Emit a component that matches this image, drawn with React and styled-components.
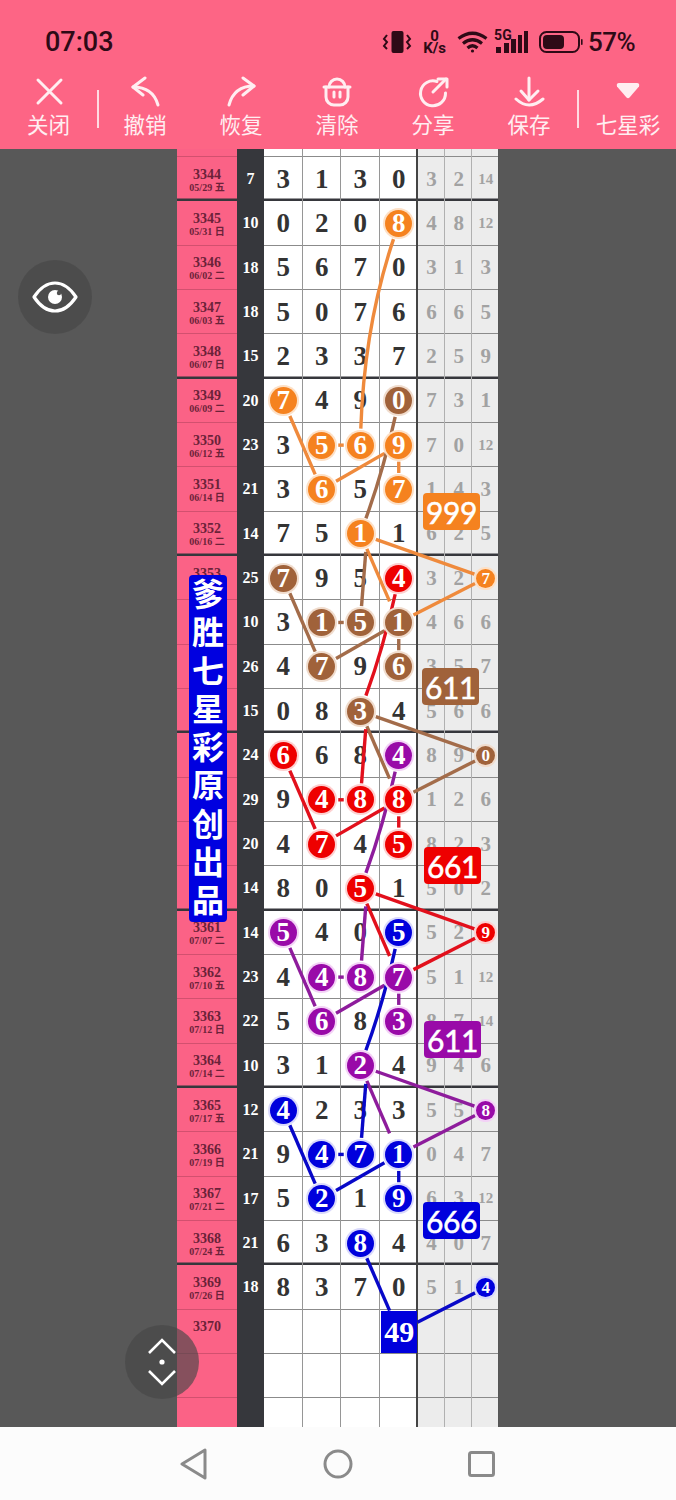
import React from "react";
import styled, { createGlobalStyle } from "styled-components";

const SERIF = `"Liberation Serif", "Noto Sans CJK SC", serif`;
const CJK = `"Noto Sans", "Noto Sans CJK SC", sans-serif`;

const tones = {
  o: { bg: "#f5821f", halo: "#fde0c6", line: "#ef8a3c" },
  b: { bg: "#a0623a", halo: "#f0dccd", line: "#a36c4a" },
  r: { bg: "#ee0000", halo: "#fdd0d0", line: "#e2101c" },
  p: { bg: "#990aa8", halo: "#f3d2f6", line: "#8e1c9c" },
  u: { bg: "#0000dc", halo: "#d9d9fb", line: "#0808c8" }
};

// id, draw date, sum, four main digits, three side digits; a trailing letter puts the digit on a ball
const rows = [
  ["3344", "05/29 五", "7", "3 1 3 0", "3 2 14"],
  ["3345", "05/31 日", "10", "0 2 0 8o", "4 8 12"],
  ["3346", "06/02 二", "18", "5 6 7 0", "3 1 3"],
  ["3347", "06/03 五", "18", "5 0 7 6", "6 6 5"],
  ["3348", "06/07 日", "15", "2 3 3 7", "2 5 9"],
  ["3349", "06/09 二", "20", "7o 4 9 0b", "7 3 1"],
  ["3350", "06/12 五", "23", "3 5o 6o 9o", "7 0 12"],
  ["3351", "06/14 日", "21", "3 6o 5 7o", "1 4 3"],
  ["3352", "06/16 二", "14", "7 5 1o 1", "6 2 5"],
  ["3353", "06/19 五", "25", "7b 9 5 4r", "3 2 7o"],
  ["3354", "06/21 日", "10", "3 1b 5b 1b", "4 6 6"],
  ["3355", "06/23 二", "26", "4 7b 9 6b", "3 5 7"],
  ["3356", "06/26 五", "15", "0 8 3b 4", "5 6 6"],
  ["3357", "06/28 日", "24", "6r 6 8 4p", "8 9 0b"],
  ["3358", "06/30 二", "29", "9 4r 8r 8r", "1 2 6"],
  ["3359", "07/03 五", "20", "4 7r 4 5r", "8 2 3"],
  ["3360", "07/05 日", "14", "8 0 5r 1", "5 0 2"],
  ["3361", "07/07 二", "14", "5p 4 0 5u", "5 2 9r"],
  ["3362", "07/10 五", "23", "4 4p 8p 7p", "5 1 12"],
  ["3363", "07/12 日", "22", "5 6p 8 3p", "8 7 14"],
  ["3364", "07/14 二", "10", "3 1 2p 4", "9 4 6"],
  ["3365", "07/17 五", "12", "4u 2 3 3", "5 5 8p"],
  ["3366", "07/19 日", "21", "9 4u 7u 1u", "0 4 7"],
  ["3367", "07/21 二", "17", "5 2u 1 9u", "6 3 12"],
  ["3368", "07/24 五", "21", "6 3 8u 4", "4 0 7"],
  ["3369", "07/26 日", "18", "8 3 7 0", "5 1 4u"],
  ["3370", "", "", "_ _ _ 49u", "_ _ _"],
  ["", "", "", "_ _ _ _", "_ _ _"],
  ["", "", "", "_ _ _ _", "_ _ _"]
];

const heavyAfter = [0, 4, 8, 12, 16, 20, 24];

const ROW_H = 44.33;
const TOP_H = 8;
const MAIN_X = 87;
const MAIN_W = 38.5;
const SIDE_X = MAIN_X + MAIN_W * 4;
const SIDE_W = 27.1;

const mainX = k => MAIN_X + MAIN_W * (k + 0.5);
const sideX = k => SIDE_X + SIDE_W * (k + 0.5);
const rowY = i => TOP_H + ROW_H * (i + 0.5);

const BIG = 16.5;
const SMALL = 12;

// pull a point towards another one so the stroke stops short of the ball
function pull(a, b, by) {
  const dx = b[0] - a[0];
  const dy = b[1] - a[1];
  const len = Math.hypot(dx, dy);
  return [a[0] + (dx / len) * by, a[1] + (dy / len) * by];
}

function straight(a, b, trimA, trimB) {
  const s = pull(a, b, trimA);
  const e = pull(b, a, trimB);
  return `M${s[0]} ${s[1]}L${e[0]} ${e[1]}`;
}

function curve(a, b, ctrl, trimA, trimB) {
  const s = pull(a, ctrl, trimA);
  const e = pull(b, ctrl, trimB);
  return `M${s[0]} ${s[1]}Q${ctrl[0]} ${ctrl[1]} ${e[0]} ${e[1]}`;
}

function buildStrokes() {
  const out = [];
  const groups = [
    ["o", 5],
    ["b", 9],
    ["r", 13],
    ["p", 17],
    ["u", 21]
  ];
  groups.forEach(([tone, b]) => {
    const add = d => out.push({ tone, d });
    const m = (k, i) => [mainX(k), rowY(i)];
    const side = i => [sideX(2), rowY(i)];
    add(straight(m(0, b), m(1, b + 2), BIG, BIG));
    add(straight(m(1, b + 2), m(3, b + 1), BIG, BIG));
    add(straight(m(1, b + 1), m(2, b + 1), BIG, BIG));
    add(straight(m(3, b + 1), m(3, b + 2), BIG, BIG));
    if (tone === "u") {
      // the last drop runs into the pending square rather than the side ball
      add(straight(m(2, b + 3), m(3, b + 5), BIG, 23));
      add(straight(side(b + 4), m(3, b + 5), SMALL, 21));
    } else {
      add(straight(m(2, b + 3), side(b + 4), BIG, SMALL));
      add(straight(side(b + 4), m(3, b + 5), SMALL, BIG));
      add(straight(m(2, b + 3), m(3, b + 5), BIG, 23));
    }
    if (tone === "o") {
      add(curve(m(3, 1), m(2, 6), [mainX(2) + 4, rowY(1) + 103], BIG, BIG));
    } else {
      const from = m(3, b - 4);
      add(curve(from, m(2, b - 1), [mainX(2) + 23, from[1] + 70], BIG, BIG));
      add(straight(m(2, b + 1), [mainX(2) + 5.5, rowY(b - 1) + 18], BIG, 0));
    }
  });
  return out;
}

const strokes = buildStrokes();

const tags = [
  { text: "999", tone: "o", x: 246, y: 344 },
  { text: "611", tone: "b", x: 245, y: 519 },
  { text: "661", tone: "r", x: 247, y: 698 },
  { text: "611", tone: "p", x: 247, y: 872 },
  { text: "666", tone: "u", x: 246, y: 1053 }
];

const GlobalStyle = createGlobalStyle`
  html, body {
    margin: 0;
    padding: 0;
    background: #585858;
  }
`;

const Screen = styled.div`
  position: relative;
  width: 676px;
  height: 1500px;
  display: flex;
  flex-direction: column;
  overflow: hidden;
  background: #585858;
`;

const Header = styled.header`
  flex: 0 0 149px;
  background: #fd6585;
  display: flex;
  flex-direction: column;
`;

const StatusBar = styled.div`
  height: 76px;
  padding: 7px 41px 0 45px;
  box-sizing: border-box;
  display: flex;
  align-items: center;
  color: #2e0a16;
  font-family: Roboto, sans-serif;
`;

const Clock = styled.div`
  font-size: 27px;
  font-weight: 500;
`;

const StatusIcons = styled.div`
  margin-left: auto;
  display: flex;
  align-items: center;
  gap: 10px;
`;

const Speed = styled.div`
  width: 25px;
  display: flex;
  flex-direction: column;
  align-items: center;
  font-size: 15px;
  font-weight: 700;
  line-height: 12px;
`;

const Network = styled.div`
  position: relative;
  width: 35px;
  height: 22px;
  margin-left: -4px;
`;

const NetworkLabel = styled.span`
  position: absolute;
  left: 0;
  top: -3px;
  font-size: 14px;
  font-weight: 700;
  line-height: 14px;
`;

const Percent = styled.div`
  font-size: 26px;
  font-weight: 500;
  letter-spacing: -0.6px;
  margin-left: -5px;
`;

const Toolbar = styled.nav`
  display: flex;
  align-items: flex-start;
`;

const Tool = styled.div`
  flex: 0 0 ${p => p.$width || 96}px;
  box-sizing: border-box;
  padding-left: ${p => p.$inset || 0}px;
  display: flex;
  flex-direction: column;
  align-items: center;
  color: #ffeef1;
`;

const ToolLabel = styled.span`
  margin-top: 2px;
  font-family: ${CJK};
  font-size: 21.5px;
  line-height: 30px;
  white-space: nowrap;
`;

const ToolRule = styled.span`
  flex: 0 0 2px;
  height: 38px;
  margin: 14px -2px 0 0;
  background: #ffdbe2;
`;

const Board = styled.main`
  flex: 1;
  min-height: 0;
  padding-left: 177px;
  overflow: hidden;
`;

const Table = styled.div`
  position: relative;
  width: 322px;
  height: 100%;
  overflow: hidden;
`;

const Row = styled.div`
  display: grid;
  grid-template-columns: 60px 27px repeat(4, ${MAIN_W}px) repeat(3, ${SIDE_W}px);
  height: ${p => p.$height}px;
`;

const bottomRule = (heavy, color) =>
  heavy ? "inset 0 -2.5px 0 #36373c" : `inset 0 -1px 0 ${color}`;

const Cell = styled.div`
  display: flex;
  align-items: center;
  justify-content: center;
  min-width: 0;
  font-family: ${SERIF};
  font-weight: 700;
`;

const IdCell = styled(Cell)`
  flex-direction: column;
  padding-top: 2px;
  box-sizing: border-box;
  background: #fb6286;
  color: #6b2239;
  box-shadow: ${p => bottomRule(p.$heavy, "#d2506f")};
`;

const IdText = styled.span`
  font-size: 14px;
  line-height: 15px;
`;

const DateText = styled.span`
  height: 12px;
  font-size: 10px;
  line-height: 12px;
  white-space: nowrap;
`;

const SumCell = styled(Cell)`
  background: #36373c;
  color: #fff;
  font-size: 16px;
`;

const NumCell = styled(Cell)`
  background: #fff;
  color: #333;
  font-size: 27px;
  box-shadow: ${p => (p.$last ? "inset -2px 0 0 #444" : "inset -1px 0 0 #969696")},
    ${p => bottomRule(p.$heavy, "#8b8b8b")};
`;

const SideCell = styled(Cell)`
  background: #ececec;
  color: #a2a2a2;
  font-size: ${p => (p.$tiny ? 15 : 21)}px;
  box-shadow: ${p => (p.$last ? "inset -1px 0 0 #555" : "inset -1px 0 0 #b0b0b0")},
    ${p => bottomRule(p.$heavy, "#8b8b8b")};
`;

const Ball = styled.span`
  position: relative;
  z-index: 2;
  flex: none;
  width: ${p => (p.$small ? 19 : 27)}px;
  height: ${p => (p.$small ? 19 : 27)}px;
  border-radius: 50%;
  display: flex;
  align-items: center;
  justify-content: center;
  background: ${p => tones[p.$tone].bg};
  box-shadow: 0 0 0 2px ${p => tones[p.$tone].halo};
  color: #fff;
  font-size: ${p => (p.$small ? 17 : 27)}px;
  line-height: 1;
`;

const Pending = styled.span`
  position: relative;
  z-index: 2;
  flex: none;
  width: 36px;
  height: 42px;
  margin-left: 1px;
  display: flex;
  align-items: center;
  justify-content: center;
  background: ${p => tones[p.$tone].bg};
  color: #fff;
  font-size: 30px;
  font-weight: 700;
`;

const Strokes = styled.svg`
  position: absolute;
  left: 0;
  top: 0;
  z-index: 1;
  pointer-events: none;
`;

const Tag = styled.div`
  position: absolute;
  left: ${p => p.$x}px;
  top: ${p => p.$y}px;
  z-index: 3;
  width: 57px;
  height: 37px;
  border-radius: 4px;
  display: flex;
  align-items: center;
  justify-content: center;
  background: ${p => tones[p.$tone].bg};
  color: #fff;
  font-family: Lato, sans-serif;
  font-size: 30px;
  line-height: 1;
  letter-spacing: -0.4px;
  -webkit-text-stroke: 0.5px #fff;
`;

const Banner = styled.div`
  position: absolute;
  left: 12px;
  top: 426px;
  z-index: 4;
  box-sizing: border-box;
  width: 38px;
  height: 347px;
  padding: 4px 0 0;
  border-radius: 4px;
  display: flex;
  justify-content: center;
  background: #0000e0;
  color: #fff;
  font-family: "Noto Sans CJK SC", sans-serif;
  font-size: 32px;
  font-weight: 700;
  line-height: 38px;
  letter-spacing: 6.25px;
  white-space: nowrap;
  writing-mode: vertical-rl;
  text-orientation: upright;
`;

const Float = styled.div`
  position: absolute;
  z-index: 5;
  left: ${p => p.$x}px;
  top: ${p => p.$y}px;
  width: 74px;
  height: 74px;
  border-radius: 50%;
  display: flex;
  align-items: center;
  justify-content: center;
  background: rgba(70, 70, 70, 0.65);
`;

const SystemBar = styled.footer`
  flex: 0 0 73px;
  background: #fcfcfc;
  display: flex;
  align-items: center;
  justify-content: center;
  gap: 96px;
`;

const iconStroke = {
  fill: "none",
  stroke: "currentColor",
  strokeWidth: 3,
  strokeLinecap: "round",
  strokeLinejoin: "round"
};

const ToolIcon = ({ children }) => (
  <svg width="32" height="32" viewBox="0 0 32 32" {...iconStroke}>
    {children}
  </svg>
);

const tools = [
  {
    label: "撤销",
    icon: (
      <>
        <path d="M16 2L4 11L14 19" />
        <path d="M4 11Q24 11 29 29" />
      </>
    )
  },
  {
    label: "恢复",
    icon: (
      <>
        <path d="M18 2L29 10L18 19" />
        <path d="M29 10Q9 10 4 29" />
      </>
    )
  },
  {
    label: "清除",
    icon: (
      <>
        <path d="M3 11H29" />
        <path d="M8 11a8 8 0 0 1 16 0" />
        <path d="M5 11V21a8 8 0 0 0 8 8h6a8 8 0 0 0 8-8V11" />
        <path d="M13 16v5M19 16v5" />
      </>
    )
  },
  {
    label: "分享",
    icon: (
      <>
        <path d="M20 5.5A12.5 12.5 0 1 0 28.5 17" />
        <path d="M16 16L29 3" />
        <path d="M21 3H30V11" />
      </>
    )
  },
  {
    label: "保存",
    icon: (
      <>
        <path d="M16 2V24" />
        <path d="M8 15L16 24L25 15" />
        <path d="M3 23Q16 35 30 23" />
      </>
    )
  }
];

function Vibrate() {
  return (
    <svg width="30" height="22" viewBox="0 0 30 22">
      <rect x="9.5" y="0" width="12" height="22" rx="2" fill="currentColor" />
      <path
        d="M5 4L2 8L5 11L2 15L5 18M25 4L28 8L25 11L28 15L25 18"
        fill="none"
        stroke="currentColor"
        strokeWidth="2"
      />
    </svg>
  );
}

function Wifi() {
  return (
    <svg width="31" height="22" viewBox="0 0 31 22" fill="none" stroke="currentColor" strokeWidth="3.2">
      <path d="M1.5 7.5Q15.5 -3 29.5 7.5" />
      <path d="M6 12.5Q15.5 5 25 12.5" />
      <path d="M10.5 17Q15.5 12.5 20.5 17" />
      <circle cx="15.5" cy="20" r="1.6" fill="currentColor" stroke="none" />
    </svg>
  );
}

function Bars() {
  return (
    <svg width="35" height="22" viewBox="0 0 35 22" fill="currentColor">
      <rect x="2" y="16" width="5" height="6" />
      <rect x="10" y="12" width="5" height="10" />
      <rect x="17" y="8" width="5" height="14" />
      <rect x="24" y="4" width="4" height="18" />
      <rect x="30" y="0" width="4" height="22" />
    </svg>
  );
}

function Battery() {
  return (
    <svg width="44" height="22" viewBox="0 0 44 22">
      <rect x="1" y="1" width="39" height="20" rx="6.5" fill="none" stroke="currentColor" strokeWidth="2" />
      <rect x="4" y="4" width="21" height="14" rx="4" fill="currentColor" />
      <rect x="42" y="8" width="1.6" height="6" rx="0.8" fill="currentColor" />
    </svg>
  );
}

function Eye() {
  return (
    <svg width="46" height="34" viewBox="0 0 46 34" fill="none" stroke="#fff" strokeWidth="3.2">
      <path d="M2 17C8 8 15 3 23 3S38 8 44 17C38 26 31 31 23 31S8 26 2 17Z" strokeLinejoin="round" />
      <circle cx="23" cy="17" r="7" fill="#fff" stroke="none" />
      <circle cx="27" cy="13" r="2.2" fill="#4f4f4f" stroke="none" />
    </svg>
  );
}

function Stepper() {
  return (
    <svg width="30" height="48" viewBox="0 0 30 48" fill="none" stroke="#fff" strokeWidth="2.6">
      <path d="M2 15L15 2L28 15" />
      <path d="M2 33L15 46L28 33" />
      <circle cx="15" cy="24" r="2.6" fill="#fff" stroke="none" />
    </svg>
  );
}

function Digit({ value, small }) {
  if (value === "_") return null;
  const match = value.match(/^(\d+)([obrpu])?$/);
  const [, digits, tone] = match;
  if (!tone) return digits;
  if (digits.length > 1) return <Pending $tone={tone}>{digits}</Pending>;
  return (
    <Ball $tone={tone} $small={small}>
      {digits}
    </Ball>
  );
}

function DrawRow({ row, index }) {
  const [id, date, sum, main, side] = row;
  const heavy = heavyAfter.includes(index);
  const mainCells = main.split(" ");
  const sideCells = side.split(" ");
  return (
    <Row $height={ROW_H}>
      <IdCell $heavy={heavy}>
        <IdText>{id}</IdText>
        <DateText>{date}</DateText>
      </IdCell>
      <SumCell>{sum}</SumCell>
      {mainCells.map((value, k) => (
        <NumCell key={k} $heavy={heavy} $last={k === mainCells.length - 1}>
          <Digit value={value} />
        </NumCell>
      ))}
      {sideCells.map((value, k) => (
        <SideCell
          key={k}
          $heavy={heavy}
          $last={k === sideCells.length - 1}
          $tiny={value.length === 2 && !/[a-z]/.test(value)}
        >
          <Digit value={value} small />
        </SideCell>
      ))}
    </Row>
  );
}

export default function App() {
  return (
    <Screen>
      <GlobalStyle />
      <Header>
        <StatusBar>
          <Clock>07:03</Clock>
          <StatusIcons>
            <Vibrate />
            <Speed>
              <span>0</span>
              <span>K/s</span>
            </Speed>
            <Wifi />
            <Network>
              <NetworkLabel>5G</NetworkLabel>
              <Bars />
            </Network>
            <Battery />
            <Percent>57%</Percent>
          </StatusIcons>
        </StatusBar>
        <Toolbar>
          <Tool $width={97}>
            <ToolIcon>
              <path d="M5 4L28 27M28 4L5 27" />
            </ToolIcon>
            <ToolLabel>关闭</ToolLabel>
          </Tool>
          <ToolRule />
          {tools.map(tool => (
            <Tool key={tool.label}>
              <ToolIcon>{tool.icon}</ToolIcon>
              <ToolLabel>{tool.label}</ToolLabel>
            </Tool>
          ))}
          <ToolRule />
          <Tool $width={99} $inset={3}>
            <ToolIcon>
              <path
                d="M7 7h18q3 0 2 3.5L17.5 21.5q-1.5 1.5 -3 0L5 10.5q-1 -3.5 2 -3.5z"
                fill="currentColor"
                stroke="none"
              />
            </ToolIcon>
            <ToolLabel>七星彩</ToolLabel>
          </Tool>
        </Toolbar>
      </Header>

      <Board>
        <Table>
          <Row $height={TOP_H}>
            <IdCell />
            <SumCell />
            {[0, 1, 2, 3].map(k => (
              <NumCell key={k} $last={k === 3} />
            ))}
            {[0, 1, 2].map(k => (
              <SideCell key={k} $last={k === 2} />
            ))}
          </Row>
          {rows.map((row, i) => (
            <DrawRow key={i} row={row} index={i} />
          ))}
          <Strokes width="322" height="1278" viewBox="0 0 322 1278" fill="none" strokeWidth="3.4">
            {strokes.map((s, i) => (
              <path key={i} d={s.d} stroke={tones[s.tone].line} />
            ))}
          </Strokes>
          {tags.map(tag => (
            <Tag key={tag.tone} $tone={tag.tone} $x={tag.x} $y={tag.y}>
              {tag.text}
            </Tag>
          ))}
          <Banner>爹胜七星彩原创出品</Banner>
        </Table>
      </Board>

      <SystemBar>
        <svg width="48" height="32" viewBox="0 0 48 32" fill="none" stroke="#8a8a8a" strokeWidth="3" strokeLinejoin="round">
          <path d="M35 2V30L12 16Z" />
        </svg>
        <svg width="48" height="32" viewBox="0 0 48 32" fill="none" stroke="#8a8a8a" strokeWidth="3">
          <circle cx="24" cy="16" r="13" />
        </svg>
        <svg width="48" height="32" viewBox="0 0 48 32" fill="none" stroke="#8a8a8a" strokeWidth="3">
          <rect x="11.5" y="4.5" width="24" height="23" rx="2" />
        </svg>
      </SystemBar>

      <Float $x={18} $y={260}>
        <Eye />
      </Float>
      <Float $x={125} $y={1325}>
        <Stepper />
      </Float>
    </Screen>
  );
}
